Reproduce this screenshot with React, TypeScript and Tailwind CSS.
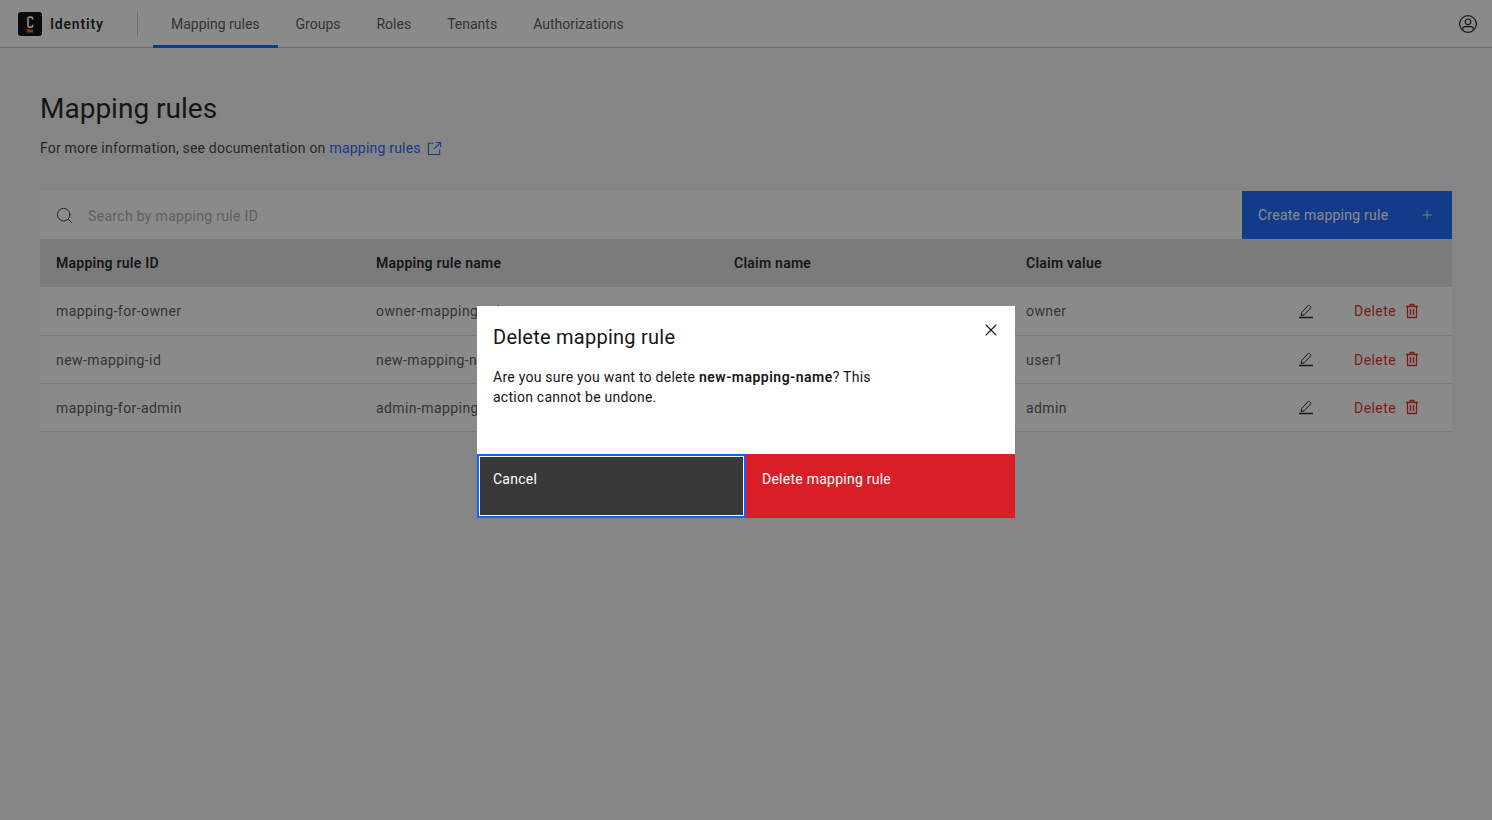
import React from "react";
import { Search, Plus, X } from "lucide-react";

const rows = [
  ["mapping-for-owner", "owner-mapping-rule", "groups", "owner"],
  ["new-mapping-id", "new-mapping-name", "groups", "user1"],
  ["mapping-for-admin", "admin-mapping-name", "groups", "admin"],
];

function EditIcon() {
  return (
    <svg width="16" height="16" viewBox="0 0 16 16" fill="none" stroke="#161616" strokeWidth="1">
      <path d="M1 14.5h14" strokeWidth="1.5" />
      <path d="M3 12.5l.7-3L10 2.7c.5-.5 1.2-.5 1.7 0l.8.8c.5.5.5 1.2 0 1.7L6 11.8l-3 .7z" />
    </svg>
  );
}

function TrashIcon() {
  return (
    <svg width="16" height="16" viewBox="0 0 16 16" fill="none" stroke="#da1e28" strokeWidth="1.3">
      <path d="M2 3.5h12M6 3.5V1.5h4v2M3.5 3.5v11h9v-11M6.5 6v6M9.5 6v6" />
    </svg>
  );
}

function LaunchIcon() {
  return (
    <svg width="15" height="15" viewBox="0 0 16 16" fill="none" stroke="#0f62fe" strokeWidth="1.1">
      <path d="M7 2.5H1.5v12h12V9" />
      <path d="M9.5 1.5h5v5M14.5 1.5L7.5 8.5" />
    </svg>
  );
}

function Logo() {
  return (
    <svg width="24" height="24" viewBox="0 0 24 24">
      <rect width="24" height="24" rx="3" fill="#000" />
      <path d="M14.6 7.6V6.6c0-.9-.6-1.4-1.4-1.4h-1.8c-.9 0-1.4.5-1.4 1.4v7.2c0 .9.5 1.4 1.4 1.4h1.8c.8 0 1.4-.5 1.4-1.4v-1" fill="none" stroke="#fff" strokeWidth="1.7" />
      <rect x="9" y="17.5" width="6" height="3" fill="#fc5d0d" />
    </svg>
  );
}

function UserIcon() {
  return (
    <svg width="20" height="20" viewBox="0 0 20 20" fill="none" stroke="#161616" strokeWidth="1.2">
      <circle cx="10" cy="10" r="8.4" />
      <circle cx="10" cy="7.8" r="2.8" />
      <path d="M4.8 15.6v-.6c0-1.4 1.1-2.3 2.4-2.3h5.6c1.3 0 2.4.9 2.4 2.3v.6" />
    </svg>
  );
}

export default function App() {
  return (
    <div className="relative h-[820px] w-[1492px] overflow-hidden bg-[#f4f4f4] font-['Roboto',sans-serif] tracking-[0.25px] text-[#161616]">
      <header className="flex h-12 items-stretch border-b border-[#c6c6c6] bg-white pl-[18px] pr-3">
        <div className="flex w-[119px] items-center">
          <Logo />
          <span className="ml-2 text-sm font-semibold tracking-[0.8px]">Identity</span>
        </div>
        <div className="mt-3 h-6 w-px bg-[#c6c6c6]" />
        <nav className="ml-[15px] flex text-sm tracking-[0px] text-[#525252]">
          <a className="-mb-px flex items-center border-b-[3px] border-[#0f62fe] px-[18px] pt-[3px]">Mapping rules</a>
          <a className="flex items-center px-[18px]">Groups</a>
          <a className="flex items-center px-[18px]">Roles</a>
          <a className="flex items-center px-[18px]">Tenants</a>
          <a className="flex items-center px-[18px]">Authorizations</a>
        </nav>
        <div className="ml-auto flex items-center pr-[2px]">
          <UserIcon />
        </div>
      </header>

      <main className="px-10 pt-[42px]">
        <h1 className="text-[28px] leading-[38px] tracking-[0px]">Mapping rules</h1>
        <p className="mt-[10px] flex items-center text-sm leading-5 tracking-[0.2px] text-[#393939]">
          For more information, see documentation on
          <a className="ml-1 text-[#0f62fe]">mapping rules</a>
          <span className="ml-1.5"><LaunchIcon /></span>
        </p>

        <div className="mt-[33px] flex h-12 bg-white">
          <div className="flex flex-1 items-center pl-4 text-sm tracking-[0.32px] text-[#a8a8a8]">
            <Search size={19} strokeWidth={1.1} className="-ml-px text-[#161616]" />
            <span className="ml-[14px] pt-px">Search by mapping rule ID</span>
          </div>
          <button className="flex w-[210px] items-center justify-between bg-[#0f62fe] pl-4 pr-[18px] text-sm text-white">
            Create mapping rule
            <Plus size={14} strokeWidth={1.4} />
          </button>
        </div>

        <div className="grid h-12 grid-cols-[320px_358px_292px_1fr] items-center bg-[#e0e0e0] pl-4 text-sm font-semibold">
          <span>Mapping rule ID</span>
          <span>Mapping rule name</span>
          <span>Claim name</span>
          <span>Claim value</span>
        </div>
        {rows.map((r, i) => (
          <div key={r[0]} className={i === 0 ? "grid h-[49px] grid-cols-[320px_358px_292px_1fr] items-center border-b border-[#e0e0e0] bg-white pl-4 text-sm tracking-[0.42px] text-[#525252]" : "grid h-12 grid-cols-[320px_358px_292px_1fr] items-center border-b border-[#e0e0e0] bg-white pl-4 text-sm tracking-[0.42px] text-[#525252]"}>
            <span>{r[0]}</span>
            <span>{r[1]}</span>
            <span>{r[2]}</span>
            <div className="flex items-center">
              <span>{r[3]}</span>
              <span className="ml-auto flex items-center pr-[32px]">
                <span className={i === 0 ? "" : "-mt-[2px]"}><EditIcon /></span>
                <span className="ml-[40px] tracking-[0.42px] text-[#da1e28]">Delete</span>
                <span className={i === 0 ? "ml-2" : "-mt-[2px] ml-2"}><TrashIcon /></span>
              </span>
            </div>
          </div>
        ))}
      </main>

      <div className="absolute inset-0 flex items-start justify-center bg-[#161616]/50 pt-[306px]">
        <div className="relative flex h-[212px] w-[538px] flex-col bg-white">
          <button className="absolute right-[14px] top-[14px]">
            <X size={20} strokeWidth={1.3} />
          </button>
          <div className="flex-1 px-4 pt-[15px]">
            <h2 className="text-xl leading-[32px]">Delete mapping rule</h2>
            <p className="mt-[14px] w-[400px] text-sm leading-5">
              Are you sure you want to delete <b className="font-semibold tracking-[0.5px]">new-mapping-name</b>? This action cannot be undone.
            </p>
          </div>
          <div className="flex h-16 text-sm text-white">
            <button className="flex w-[269px] border-2 border-[#0f62fe] bg-[#393939] pl-3.5 pt-[13px] text-left shadow-[inset_0_0_0_1px_white]">Cancel</button>
            <button className="flex flex-1 bg-[#da1e28] pl-4 pt-[15px] text-left">Delete mapping rule</button>
          </div>
        </div>
      </div>
    </div>
  );
}
